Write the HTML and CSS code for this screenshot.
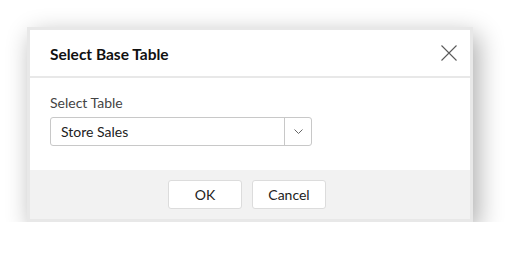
FILE: index.html
```html
<!DOCTYPE html>
<html lang="en">
<head>
    <meta charset="UTF-8">
    <meta name="viewport" content="width=device-width, initial-scale=1.0">
    <title>Select Base Table</title>
    <link rel="stylesheet" href="styles.css">
</head>
<body>
    <div class="dialog">
        <div class="dialog-inner">
            <div class="header">
                <span class="title">Select Base Table</span>
                <button class="close" aria-label="Close">
                    <svg width="16" height="16" viewBox="0 0 16 16">
                        <path d="M0.5 0.5 L15.5 15.5 M15.5 0.5 L0.5 15.5" stroke="#5a5a5a" stroke-width="1.1" fill="none"/>
                    </svg>
                </button>
            </div>
            <div class="content">
                <div class="label">Select Table</div>
                <div class="select">
                    <span class="value">Store Sales</span>
                    <span class="arrow">
                        <svg width="9" height="5" viewBox="0 0 9 5">
                            <path d="M0.5 0.5 L4.5 4.5 L8.5 0.5" stroke="#666" stroke-width="1" fill="none"/>
                        </svg>
                    </span>
                </div>
            </div>
            <div class="footer">
                <button class="btn">OK</button>
                <button class="btn">Cancel</button>
            </div>
        </div>
    </div>
</body>
</html>
```

FILE: styles.css
```css
body {
    margin: 0;
    padding: 27px 0 0 27px;
    background: #fff;
    font-family: Lato, "Open Sans", Arial, sans-serif;
}
.dialog {
    width: 440px;
    border: 3px solid #e8e8e8;
    box-shadow: 5px 8px 24px rgba(0, 0, 0, 0.33);
}
.dialog-inner {
    background: #fff;
}
.header {
    display: flex;
    align-items: center;
    justify-content: space-between;
    height: 46px;
    padding: 0 13px 0 20px;
    border-bottom: 2px solid #e8e8e8;
}
.title {
    font-size: 15.5px;
    font-weight: bold;
    color: #111;
    padding-top: 2px;
}
.close {
    border: none;
    background: none;
    padding: 0;
    width: 16px;
    height: 16px;
    cursor: pointer;
}
.content {
    padding: 16px 20px 24px 20px;
}
.label {
    font-size: 14px;
    color: #444;
    margin-bottom: 6px;
}
.select {
    display: flex;
    width: 260px;
    height: 27px;
    border: 1px solid #c8c8c8;
    border-radius: 3px;
}
.value {
    flex: 1;
    font-size: 14px;
    color: #222;
    line-height: 27px;
    padding-left: 10px;
}
.arrow {
    width: 26px;
    border-left: 1px solid #c8c8c8;
    display: flex;
    align-items: center;
    justify-content: center;
}
.footer {
    background: #f2f2f2;
    height: 49px;
    padding-right: 6px;
    display: flex;
    align-items: center;
    justify-content: center;
    gap: 10px;
}
.btn {
    width: 74px;
    height: 29px;
    background: #fff;
    border: 1px solid #dcdcdc;
    border-radius: 3px;
    font-family: Lato, "Open Sans", Arial, sans-serif;
    font-size: 14px;
    color: #222;
    cursor: pointer;
}
```
